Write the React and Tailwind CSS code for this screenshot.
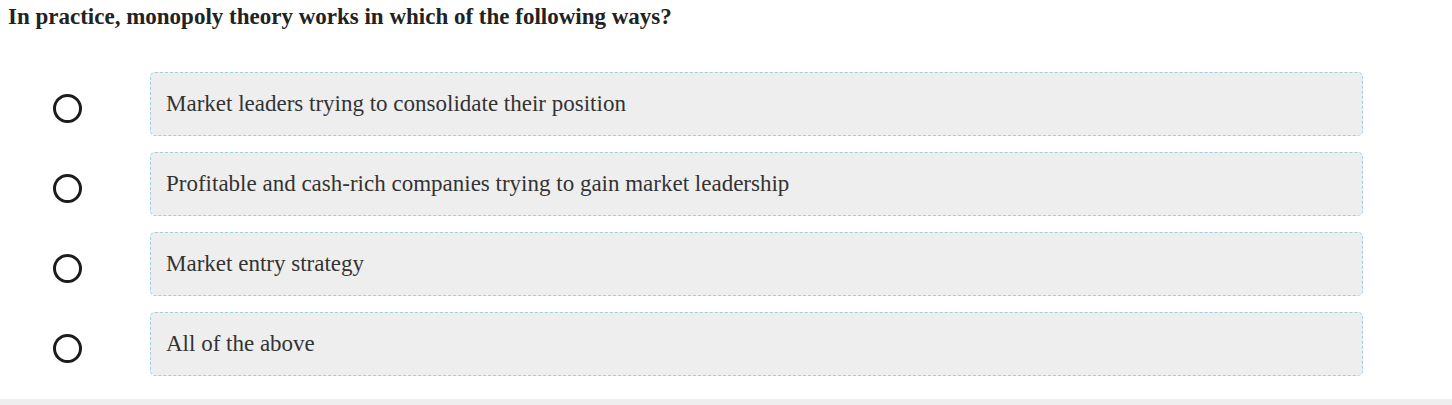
export default function App() {
  const options = [
    "Market leaders trying to consolidate their position",
    "Profitable and cash-rich companies trying to gain market leadership",
    "Market entry strategy",
    "All of the above",
  ];
  return (
    <div className="w-[1452px] h-[405px] bg-white overflow-hidden flex flex-col" style={{ fontFamily: '"Liberation Serif", serif' }}>
      <div className="px-[8px] pt-[3px] text-[23px] leading-[28px] font-bold text-[#222]">
        In practice, monopoly theory works in which of the following ways?
      </div>
      <div className="mt-[41px] flex flex-col gap-[16px]">
        {options.map((o) => (
          <div key={o} className="flex items-center h-[64px]">
            <div className="w-[150px] flex justify-center pl-[2px] pr-[18px]">
              <div className="w-[29px] h-[29px] rounded-full border-[3px] border-[#1c1c1c] mt-[8px]" />
            </div>
            <div className="w-[1213px] h-[64px] bg-[#eeeeee] border border-dashed border-[#9dd0e6] rounded-[5px] flex items-center pl-[15px] pt-[1px] text-[23px] text-[#333]">
              {o}
            </div>
          </div>
        ))}
      </div>
      <div className="mt-auto h-[6px] bg-[#eeeeee]" />
    </div>
  );
}
